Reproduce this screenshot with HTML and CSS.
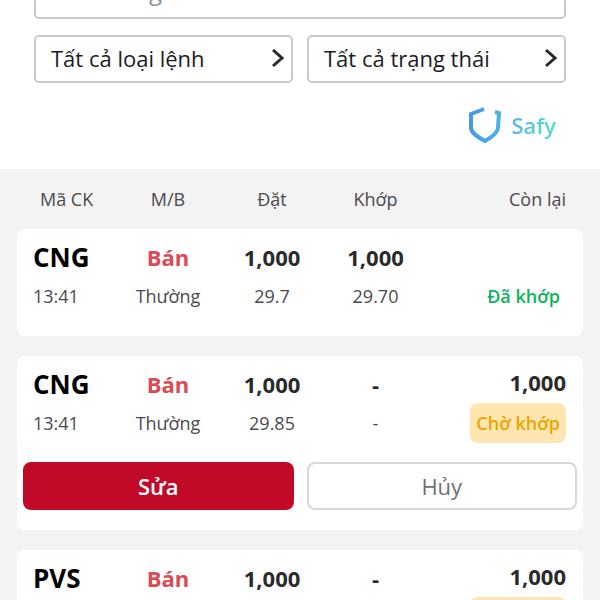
FILE: index.html
```html
<!DOCTYPE html>
<html lang="vi">
<head>
  <meta charset="utf-8">
  <meta name="viewport" content="width=device-width, initial-scale=1">
  <title>Sổ lệnh</title>
  <link rel="stylesheet" href="styles.css">
</head>
<body>

  <form class="filters">
    <input class="field search" type="text" placeholder="Mã chứng khoán" aria-label="Mã chứng khoán">
    <div class="filter-row">
      <div class="select-box">
        <select class="field" aria-label="Loại lệnh">
          <option>Tất cả loại lệnh</option>
        </select>
        <svg class="chevron" viewBox="0 0 12 20"><path d="M1 2l9 8-9 8"/></svg>
      </div>
      <div class="select-box">
        <select class="field" aria-label="Trạng thái">
          <option>Tất cả trạng thái</option>
        </select>
        <svg class="chevron" viewBox="0 0 12 20"><path d="M1 2l9 8-9 8"/></svg>
      </div>
    </div>
    <a class="safy" href="#">
      <svg class="shield" viewBox="0 0 32 36">
        <defs>
          <linearGradient id="shieldColor">
            <stop offset="0" stop-color="#4a97e8"/>
            <stop offset="1" stop-color="#4fb0e6"/>
          </linearGradient>
        </defs>
        <path d="M15 2L2 7v14c0 5 7 9 14 13 7-4 13-8 13-13l1-15-4-1"/>
      </svg>
      <span>Safy</span>
    </a>
  </form>

  <table class="orders">
    <thead>
      <tr class="row">
        <th class="symbol">Mã CK</th>
        <th>M/B</th>
        <th>Đặt</th>
        <th>Khớp</th>
        <th class="remain">Còn lại</th>
      </tr>
    </thead>

    <tbody class="card">
      <tr class="row">
        <td class="symbol"><b>CNG</b><span>13:41</span></td>
        <td><b class="sell">Bán</b><span>Thường</span></td>
        <td><b>1,000</b><span>29.7</span></td>
        <td><b>1,000</b><span>29.70</span></td>
        <td class="remain"><b></b><span class="status matched">Đã khớp</span></td>
      </tr>
    </tbody>

    <tbody class="card">
      <tr class="row">
        <td class="symbol"><b>CNG</b><span>13:41</span></td>
        <td><b class="sell">Bán</b><span>Thường</span></td>
        <td><b>1,000</b><span>29.85</span></td>
        <td><b>-</b><span>-</span></td>
        <td class="remain"><b>1,000</b><span class="status waiting">Chờ khớp</span></td>
      </tr>
      <tr class="actions">
        <td colspan="5">
          <button class="btn edit" type="button">Sửa</button>
          <button class="btn cancel" type="button">Hủy</button>
        </td>
      </tr>
    </tbody>

    <tbody class="card">
      <tr class="row">
        <td class="symbol"><b>PVS</b><span>13:41</span></td>
        <td><b class="sell">Bán</b><span>Thường</span></td>
        <td><b>1,000</b><span>29.2</span></td>
        <td><b>-</b><span>-</span></td>
        <td class="remain"><b>1,000</b><span class="status waiting">Chờ khớp</span></td>
      </tr>
      <tr class="actions">
        <td colspan="5">
          <button class="btn edit" type="button">Sửa</button>
          <button class="btn cancel" type="button">Hủy</button>
        </td>
      </tr>
    </tbody>
  </table>

</body>
</html>
```

FILE: styles.css
```css
* {
  box-sizing: border-box;
}

html {
  overflow: hidden;
}

/* the list is scrolled a little, the search box is half out of view */
body {
  margin: -37px 0 0;
  font-family: "Open Sans", "Noto Sans", sans-serif;
  font-size: 18px;
  color: #4a4a4c;
  background: #fff;
}

.filters {
  display: flex;
  flex-direction: column;
  gap: 16px;
  padding: 0 34px 24px;
}

.filter-row {
  display: flex;
  gap: 14px;
}

.field {
  width: 100%;
  height: 48px;
  padding: 0 15px 2px;
  border: 2px solid #c9c9c9;
  border-radius: 5px;
  background: #fff;
  color: #1c1c1e;
  font-family: inherit;
  font-size: 22px;
}

.search {
  height: 56px;
  font-size: 24px;
}

.search::placeholder {
  color: #8e8e8e;
}

.select-box {
  position: relative;
  flex: 1;
}

.select-box select {
  appearance: none;
  cursor: pointer;
}

.chevron {
  position: absolute;
  top: 13px;
  right: 9px;
  width: 12px;
  height: 20px;
  fill: none;
  stroke: #2a2a2c;
  stroke-width: 3;
  pointer-events: none;
}

.safy {
  display: flex;
  align-items: center;
  align-self: flex-end;
  gap: 10px;
  height: 46px;
  padding: 6px 10px 0 0;
  font-size: 22px;
  font-weight: 600;
  text-decoration: none;
}

.safy span {
  color: transparent;
  background: linear-gradient(90deg, #5bb8e8, #4fe0c8);
  background-clip: text;
  -webkit-background-clip: text;
}

.shield {
  width: 32px;
  height: 36px;
  fill: none;
  stroke: url(#shieldColor);
  stroke-width: 4;
}

.orders {
  display: block;
  padding: 0 17px 20px;
  background: #f3f3f3;
}

.orders thead {
  display: block;
}

.row {
  display: grid;
  grid-template-columns: 83fr 104fr 104fr 103fr 139fr;
  padding: 0 17px 0 16px;
}

th,
td {
  padding: 0;
  text-align: center;
}

th {
  font-weight: 400;
  line-height: 60px;
}

.symbol {
  text-align: left;
}

th.symbol {
  padding-left: 7px;
}

.remain {
  text-align: right;
}

.card {
  display: block;
  margin-bottom: 20px;
  padding: 9px 0 20px;
  border-radius: 8px;
  background: #fff;
}

.card .row td {
  display: flex;
  flex-direction: column;
  align-items: center;
}

.card .row .symbol {
  align-items: flex-start;
}

.card .row .remain {
  align-items: flex-end;
}

.card b {
  height: 38px;
  line-height: 38px;
  font-size: 22px;
  color: #2a2a2c;
}

.card span {
  line-height: 40px;
}

.card .symbol b {
  font-size: 26px;
  color: #000;
}

.card .sell {
  color: #d94c55;
}

.card .remain b {
  line-height: 34px;
}

.status {
  padding: 0 6px;
  border-radius: 8px;
  font-weight: 600;
}

.matched {
  color: #0cb45c;
}

.waiting {
  color: #eda400;
  background: #ffe5b0;
}

.actions {
  display: block;
}

.actions td {
  display: flex;
  gap: 13px;
  padding: 19px 6px 0;
}

.btn {
  flex: 1;
  height: 48px;
  border: 2px solid #d8d8d8;
  border-radius: 8px;
  background: #fff;
  color: #707070;
  font-family: inherit;
  font-size: 22px;
  font-weight: 500;
  cursor: pointer;
}

.btn.edit {
  border-color: #c00a27;
  background: #c00a27;
  color: #fff;
  font-weight: 600;
}
```
